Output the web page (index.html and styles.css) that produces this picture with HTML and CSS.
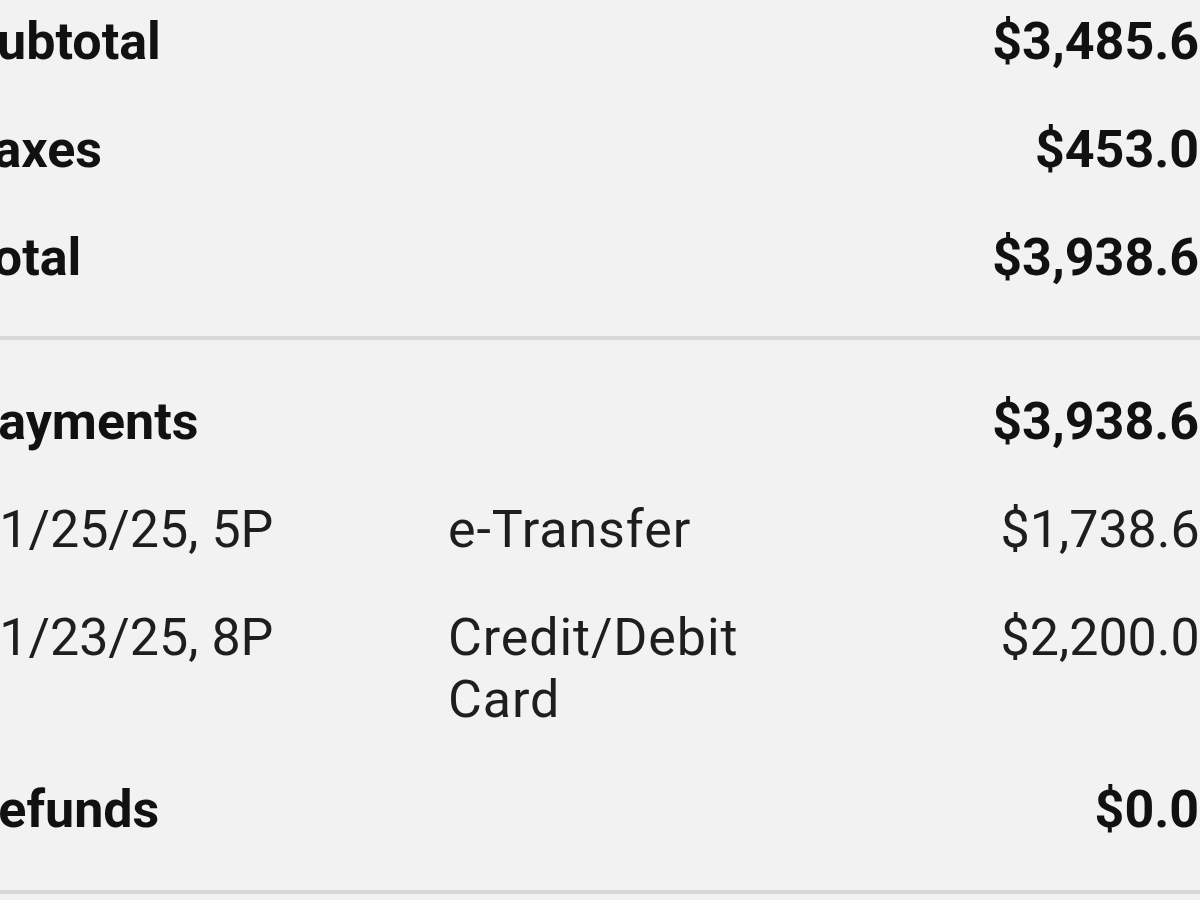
FILE: index.html
```html
<!DOCTYPE html>
<html lang="en">
<head>
<meta charset="utf-8">
<title>Order summary</title>
<link rel="stylesheet" href="styles.css">
</head>
<body>
<div class="summary">
  <section class="section section-totals">
    <div class="row">
      <span class="label">Subtotal</span>
      <span class="amount">$3,485.60</span>
    </div>
    <div class="row">
      <span class="label">Taxes</span>
      <span class="amount">$453.00</span>
    </div>
    <div class="row">
      <span class="label">Total</span>
      <span class="amount">$3,938.60</span>
    </div>
  </section>
  <section class="section section-payments">
    <div class="row">
      <span class="label">Payments</span>
      <span class="amount">$3,938.60</span>
    </div>
    <div class="payment">
      <span class="date">11/25/25, 5P</span>
      <span class="method">e-Transfer</span>
      <span class="value">$1,738.60</span>
    </div>
    <div class="payment">
      <span class="date">11/23/25, 8P</span>
      <span class="method">Credit/Debit Card</span>
      <span class="value">$2,200.00</span>
    </div>
    <div class="row">
      <span class="label">Refunds</span>
      <span class="amount">$0.00</span>
    </div>
  </section>
</div>
</body>
</html>
```
FILE: styles.css
```css
html, body {
  margin: 0;
  padding: 0;
  background: #f2f2f2;
  overflow: hidden;
}

body {
  font-family: Roboto, "Liberation Sans", sans-serif;
  font-size: 52px;
  line-height: 62px;
  color: #151515;
}

.summary {
  width: 1264px;
  margin-left: -35px;
  margin-top: -12px;
}

.section {
  border-bottom: 4px solid #d8d8d8;
}

.section-totals {
  padding-bottom: 24px;
}

.section-payments {
  padding-top: 28px;
  padding-bottom: 26px;
}

.row {
  display: flex;
  justify-content: space-between;
  padding: 23px 0;
  font-weight: 700;
  color: #111;
}

.section-payments .row:last-child {
  padding-top: 25px;
}

.payment {
  display: grid;
  grid-template-columns: 478px 300px 1fr;
  padding: 23px 0 23px 5px;
  color: #1e1e1e;
}

.method {
  letter-spacing: 0.9px;
}

.value {
  text-align: right;
}
```
